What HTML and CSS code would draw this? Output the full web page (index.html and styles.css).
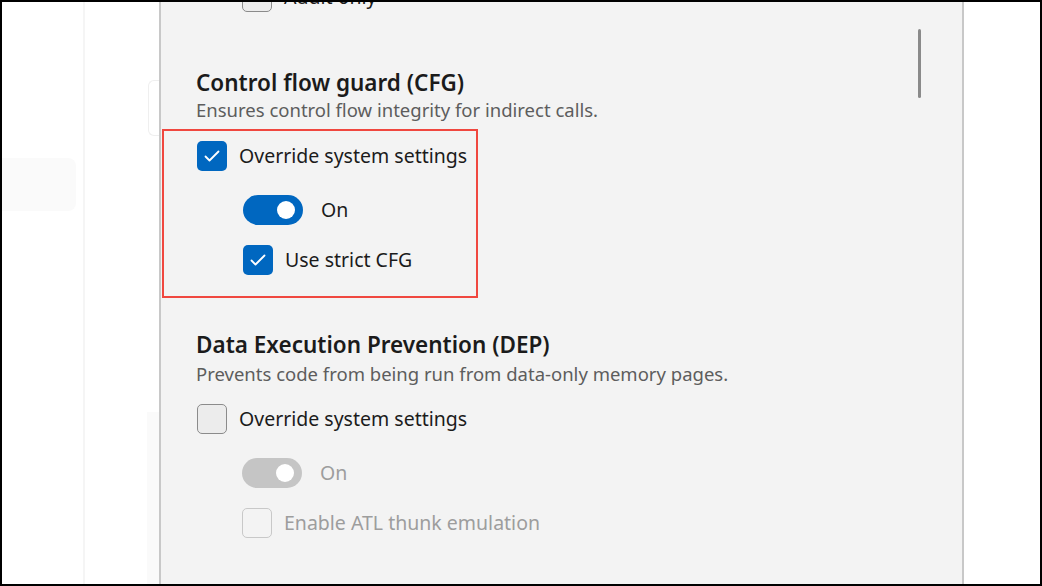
FILE: index.html
```html
<!DOCTYPE html>
<html lang="en">
<head>
    <meta charset="UTF-8">
    <title>Exploit protection</title>
    <link rel="stylesheet" href="styles.css">
</head>
<body>
<div class="frame">
    <div class="nav">
        <div class="nav-item"></div>
    </div>
    <div class="divider"></div>
    <div class="content">
        <div class="card"></div>
        <div class="card-lower"></div>
    </div>
    <div class="panel">
        <div class="scroll-thumb"></div>

        <div class="row row-top sub">
            <span class="box"></span>
            <span class="label">Audit only</span>
        </div>

        <div class="section">
            <h3>Control flow guard (CFG)</h3>
            <p class="desc">Ensures control flow integrity for indirect calls.</p>
            <div class="highlight">
                <div class="row">
                    <span class="box checked">
                        <svg viewBox="0 0 30 30"><path d="M8.5 15.5 L12.5 19.5 L21.5 10.5"/></svg>
                    </span>
                    <span class="label">Override system settings</span>
                </div>
                <div class="row sub toggle-row">
                    <span class="toggle"><span class="knob"></span></span>
                    <span class="label">On</span>
                </div>
                <div class="row sub">
                    <span class="box checked">
                        <svg viewBox="0 0 30 30"><path d="M8.5 15.5 L12.5 19.5 L21.5 10.5"/></svg>
                    </span>
                    <span class="label">Use strict CFG</span>
                </div>
            </div>
        </div>

        <div class="section section-dep">
            <h3>Data Execution Prevention (DEP)</h3>
            <p class="desc">Prevents code from being run from data-only memory pages.</p>
            <div class="options">
                <div class="row">
                    <span class="box"></span>
                    <span class="label">Override system settings</span>
                </div>
                <div class="row sub toggle-row disabled">
                    <span class="toggle"><span class="knob"></span></span>
                    <span class="label">On</span>
                </div>
                <div class="row sub disabled">
                    <span class="box"></span>
                    <span class="label">Enable ATL thunk emulation</span>
                </div>
            </div>
        </div>
    </div>
</div>
</body>
</html>
```

FILE: styles.css
```css
body {
    margin: 0;
    font-family: "Noto Sans", "Open Sans", sans-serif;
    color: #1b1b1b;
}
.frame {
    width: 1042px;
    height: 586px;
    box-sizing: border-box;
    border: 2px solid #000;
    background-color: #fff;
    display: flex;
    overflow: hidden;
}
.nav {
    width: 81px;
    flex: none;
}
.nav-item {
    margin-top: 156px;
    width: 74px;
    height: 53px;
    background-color: #fafafa;
    border-radius: 0 8px 8px 0;
}
.divider {
    width: 2px;
    flex: none;
    background-color: #f5f5f5;
}
.content {
    width: 74px;
    flex: none;
    display: flex;
    flex-direction: column;
}
.card {
    margin: 78px 0 0 63px;
    height: 54px;
    border: 1px solid #efefef;
    border-right: none;
    border-radius: 6px 0 0 6px;
}
.card-lower {
    margin: 276px 0 0 62px;
    flex: 1;
    background-color: #fafafa;
}
.panel {
    position: relative;
    width: 805px;
    flex: none;
    box-sizing: border-box;
    border-left: 2px solid #c8c8c8;
    border-right: 2px solid #c8c8c8;
    background-color: #f3f3f3;
    padding-left: 35px;
}
.scroll-thumb {
    position: absolute;
    left: 757px;
    top: 27px;
    width: 3px;
    height: 69px;
    border-radius: 2px;
    background-color: #8a8a8a;
}
.row {
    display: flex;
    align-items: center;
    height: 30px;
    font-size: 19.5px;
    line-height: 28px;
}
.row-top {
    margin-top: -20px;
}
.sub {
    margin-left: 46px;
}
.row + .row {
    margin-top: 20px;
}
.row + .toggle-row {
    margin-top: 24px;
}
.box {
    width: 30px;
    height: 30px;
    box-sizing: border-box;
    border: 1px solid #8b8b8b;
    border-radius: 5px;
    background-color: #ececec;
    margin: 0 12px 0 1px;
    flex: none;
    display: flex;
}
.sub .box {
    margin-left: 0;
}
.box.checked {
    border: none;
    background-color: #0067c0;
}
.box svg {
    width: 30px;
    height: 30px;
}
.box path {
    fill: none;
    stroke: #fff;
    stroke-width: 1.8;
    stroke-linecap: round;
    stroke-linejoin: round;
}
.toggle {
    position: relative;
    width: 60px;
    height: 30px;
    border-radius: 15px;
    background-color: #0067c0;
    margin-right: 18px;
    flex: none;
}
.knob {
    position: absolute;
    top: 6px;
    right: 8px;
    width: 18px;
    height: 18px;
    border-radius: 50%;
    background-color: #fff;
}
.disabled .label {
    color: #9d9d9d;
}
.disabled .toggle {
    background-color: #c5c5c5;
}
.disabled .box {
    border-color: #c8c8c8;
    background-color: transparent;
}
.section {
    margin-top: 57px;
}
.section-dep {
    margin-top: 33px;
}
.section h3 {
    margin: 0;
    font-size: 22.5px;
    font-weight: 600;
    line-height: 28px;
}
.desc {
    margin: 0;
    font-size: 18.5px;
    line-height: 26px;
    color: #5d5d5d;
}
.section-dep .desc {
    margin-top: 2px;
}
.highlight {
    margin: 6px 0 0 -34px;
    width: 316px;
    box-sizing: border-box;
    border: 2px solid #f0473f;
    padding: 10px 0 21px 33px;
}
.highlight .row:first-child .box {
    margin-left: 0;
}
.options {
    margin-top: 17px;
}
```
